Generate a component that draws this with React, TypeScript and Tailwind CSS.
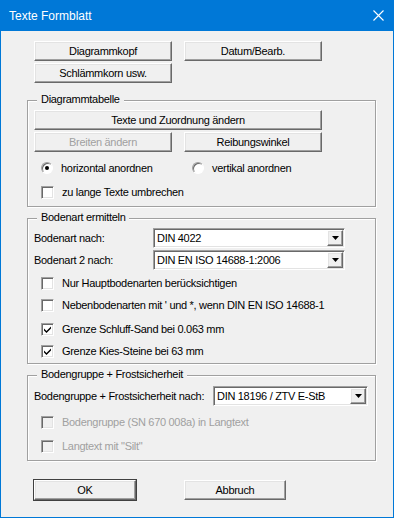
import React from "react";

const sunken =
  "border border-t-[#a0a0a0] border-l-[#a0a0a0] border-b-white border-r-white shadow-[inset_1px_1px_0_#696969,inset_-1px_-1px_0_#e3e3e3]";
const raised =
  "border border-t-white border-l-white border-b-[#696969] border-r-[#696969] shadow-[inset_-1px_-1px_0_#a0a0a0,inset_1px_1px_0_#e3e3e3]";
const txt = "text-[11px] leading-none tracking-[-0.3px] whitespace-nowrap";

function Btn({ className, children, disabled }: { className: string; children: React.ReactNode; disabled?: boolean }) {
  return (
    <div
      className={`${className} h-[20px] bg-[#f0f0f0] ${raised} flex items-center justify-center ${txt} ${
        disabled ? "text-[#a0a0a0]" : "text-black"
      }`}
    >
      {children}
    </div>
  );
}

function Combo({ className, value }: { className: string; value: string }) {
  return (
    <div className={`${className} h-[20px] bg-white ${sunken} flex items-center`}>
      <span className={`flex-1 pl-[3px] ${txt} text-black`}>{value}</span>
      <div className={`w-[16px] h-[16px] mr-[1px] bg-[#f0f0f0] ${raised} flex items-center justify-center`}>
        <svg width="7" height="4" viewBox="0 0 7 4">
          <path d="M0 0h7L3.5 4z" fill="#000" />
        </svg>
      </div>
    </div>
  );
}

function Check({ label, checked, disabled }: { label: string; checked?: boolean; disabled?: boolean }) {
  return (
    <div className="h-[14px] flex items-center pl-[7px] gap-[8px]">
      <div className={`w-[13px] h-[13px] ${disabled ? "bg-[#f0f0f0]" : "bg-white"} ${sunken} flex items-center justify-center`}>
        {checked && (
          <svg width="7" height="7" viewBox="0 0 7 7">
            <path d="M0 2.5l2.5 2.5L7 0.5v2L2.5 7 0 4.5z" fill="#000" />
          </svg>
        )}
      </div>
      <span className={`${txt} ${disabled ? "text-[#a0a0a0]" : "text-black"}`}>{label}</span>
    </div>
  );
}

function Radio({ label, checked }: { label: string; checked?: boolean }) {
  return (
    <div className="flex items-center gap-[8px]">
      <div className="w-[12px] h-[12px] rounded-full bg-white border border-t-[#a0a0a0] border-l-[#a0a0a0] border-b-white border-r-white shadow-[inset_1px_1px_0_#696969] flex items-center justify-center">
        {checked && <div className="w-[4px] h-[4px] rounded-full bg-black" />}
      </div>
      <span className={`${txt} text-black`}>{label}</span>
    </div>
  );
}

function Group({ title, className, children }: { title: string; className: string; children: React.ReactNode }) {
  return (
    <div
      className={`relative w-[349px] ${className} border border-[#a0a0a0] shadow-[1px_1px_0_#fff,inset_1px_1px_0_#fff] flex flex-col pl-[6px]`}
    >
      <span className={`absolute -top-[7px] left-[9px] px-[4px] bg-[#f0f0f0] ${txt} leading-[13px] text-black`}>
        {title}
      </span>
      {children}
    </div>
  );
}

export default function App() {
  return (
    <div className="w-[394px] h-[518px] bg-[#0078d7] flex flex-col font-['Liberation_Sans',Arial,sans-serif] select-none">
      <div className="h-[31px] flex items-center justify-between pl-[9px] pr-[10px] text-white">
        <span className="text-[12px]">Texte Formblatt</span>
        <svg width="11" height="11" viewBox="0 0 11 11">
          <path d="M0.5 0.5l10 10M10.5 0.5l-10 10" stroke="#fff" strokeWidth="1.1" />
        </svg>
      </div>
      <div className="mx-[1px] mb-[1px] flex-1 bg-[#f0f0f0] flex flex-col pl-[26px]">
        <div className="ml-[7px] mt-[10px] flex gap-[12px]">
          <Btn className="w-[138px]">Diagrammkopf</Btn>
          <Btn className="w-[138px]">Datum/Bearb.</Btn>
        </div>
        <div className="ml-[7px] mt-[2px] flex">
          <Btn className="w-[138px]">Schlämmkorn usw.</Btn>
        </div>

        <Group title="Diagrammtabelle" className="mt-[17px] h-[107px] pt-[9px]">
          <Btn className="w-[288px]">Texte und Zuordnung ändern</Btn>
          <div className="mt-[2px] flex gap-[12px]">
            <Btn className="w-[138px]" disabled>
              Breiten ändern
            </Btn>
            <Btn className="w-[138px]">Reibungswinkel</Btn>
          </div>
          <div className="mt-[9px] h-[14px] flex items-center pl-[7px]">
            <div className="w-[151px]">
              <Radio label="horizontal anordnen" checked />
            </div>
            <Radio label="vertikal anordnen" />
          </div>
          <div className="mt-[10px]">
            <Check label="zu lange Texte umbrechen" />
          </div>
        </Group>

        <Group title="Bodenart ermitteln" className="mt-[11px] h-[146px] pt-[9px]">
          <div className="flex items-center">
            <span className={`w-[119px] ${txt} text-black`}>Bodenart nach:</span>
            <Combo className="w-[192px]" value="DIN 4022" />
          </div>
          <div className="mt-[2px] flex items-center">
            <span className={`w-[119px] ${txt} text-black`}>Bodenart 2 nach:</span>
            <Combo className="w-[192px]" value="DIN EN ISO 14688-1:2006" />
          </div>
          <div className="mt-[6px]">
            <Check label="Nur Hauptbodenarten berücksichtigen" />
          </div>
          <div className="mt-[8px]">
            <Check label="Nebenbodenarten mit ' und *, wenn DIN EN ISO 14688-1" />
          </div>
          <div className="mt-[10px]">
            <Check label="Grenze Schluff-Sand bei 0.063 mm" checked />
          </div>
          <div className="mt-[8px]">
            <Check label="Grenze Kies-Steine bei 63 mm" checked />
          </div>
        </Group>

        <Group title="Bodengruppe + Frostsicherheit" className="mt-[11px] h-[86px] pt-[10px]">
          <div className="flex items-center">
            <span className={`w-[179px] ${txt} text-black`}>Bodengruppe + Frostsicherheit nach:</span>
            <Combo className="w-[155px]" value="DIN 18196 / ZTV E-StB" />
          </div>
          <div className="mt-[9px]">
            <Check label="Bodengruppe (SN 670 008a) in Langtext" disabled />
          </div>
          <div className="mt-[10px]">
            <Check label={'Langtext mit "Silt"'} disabled />
          </div>
        </Group>

        <div className="ml-[7px] mt-[19px] flex gap-[48px]">
          <Btn className="w-[102px] outline outline-1 outline-[#404040]">OK</Btn>
          <Btn className="w-[102px]">Abbruch</Btn>
        </div>
      </div>
    </div>
  );
}
